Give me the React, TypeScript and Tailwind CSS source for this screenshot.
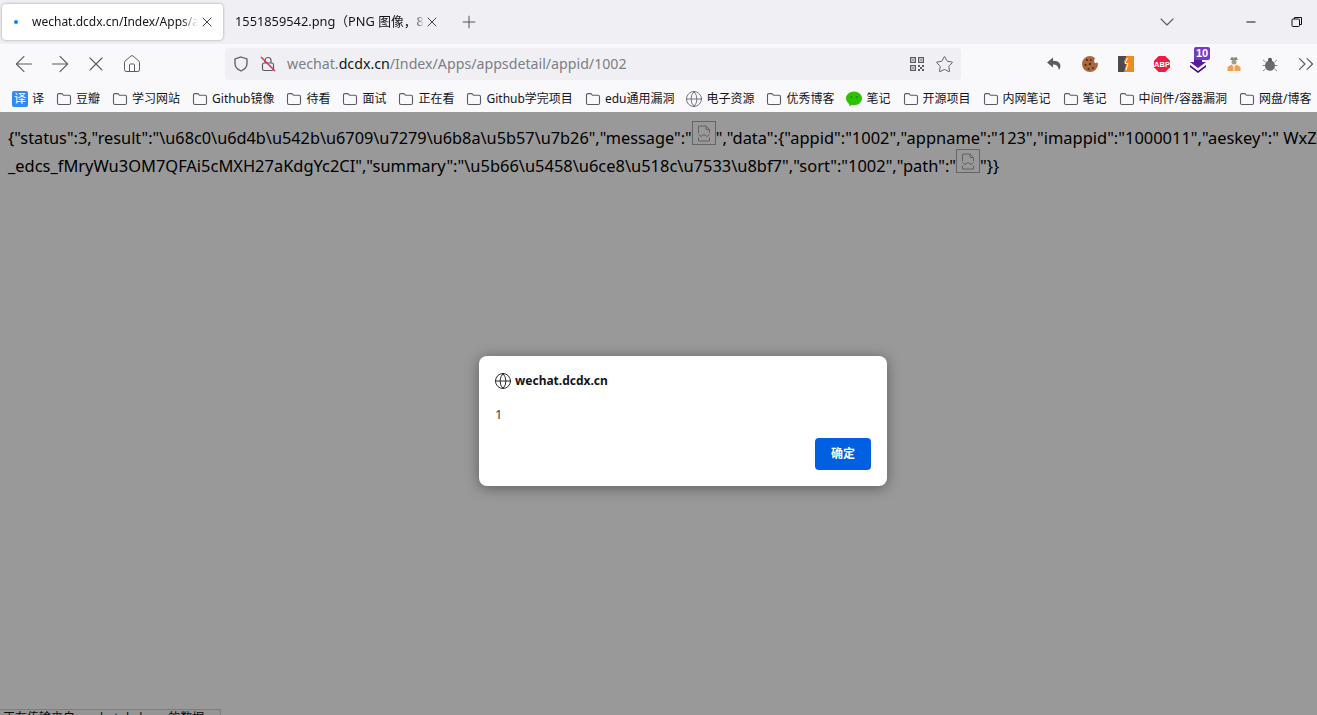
import { ArrowLeft, ArrowRight, ChevronDown, ChevronsRight, Globe, House, Minus, Plus, Star, X } from "lucide-react";

const FONT = "font-['Noto_Sans','Noto_Sans_CJK_SC',sans-serif]";

const bookmarks = [
  { label: "豆瓣" },
  { label: "学习网站" },
  { label: "Github镜像" },
  { label: "待看" },
  { label: "面试" },
  { label: "正在看" },
  { label: "Github学完项目" },
  { label: "edu通用漏洞" },
  { label: "电子资源", icon: "globe" },
  { label: "优秀博客" },
  { label: "笔记", icon: "wechat" },
  { label: "开源项目" },
  { label: "内网笔记" },
  { label: "笔记" },
  { label: "中间件/容器漏洞" },
  { label: "网盘/博客" },
];

function FolderIcon() {
  return (
    <svg width="16" height="16" viewBox="0 0 16 16" fill="none" stroke="#5b5b66" strokeWidth="1.1">
      <path d="M1.5 4c0-.8.6-1.4 1.4-1.4h3l1.6 1.7h5.6c.8 0 1.4.6 1.4 1.4v6.4c0 .8-.6 1.4-1.4 1.4H2.9c-.8 0-1.4-.6-1.4-1.4z" />
    </svg>
  );
}

function WechatIcon() {
  return (
    <svg width="16" height="16" viewBox="0 0 16 16">
      <ellipse cx="8" cy="7.4" rx="8" ry="6.8" fill="#2dc100" />
      <path d="M3.6 12l-.6 3.400 3.800-2.400z" fill="#2dc100" />
      <circle cx="5.4" cy="6" r="1" fill="#1c8a00" />
      <circle cx="10.6" cy="6" r="1" fill="#1c8a00" />
    </svg>
  );
}

function BrokenImage() {
  return (
    <span className="inline-block h-6 w-6 overflow-hidden border border-[#a8a8a8] align-[-1px]">
      <span className="flex h-full w-full items-center justify-center">
        <svg width="14" height="17" viewBox="0 0 14 17" fill="none" stroke="#a4a4a4" strokeWidth="1">
          <path d="M1.500 8V1h7.500l3.500 3.500V8" />
          <path d="M9 1v3.500h3.500" />
          <path d="M1.500 9.500l2.500 2 3-2 3 2 2.500-2" />
          <path d="M1.500 12.500V16h11v-3.500" />
        </svg>
      </span>
    </span>
  );
}

function Extensions() {
  return (
    <div className="flex items-center">
      <ToolSlot>
        <svg width="16" height="16" viewBox="0 0 16 16" fill="#5b5b66">
          <path d="M7 1.500L1 6.500l6 5V8.500c3 0 5 .8 6 5.500 1.500-2 1.800-4 1-6-.9-2-3.500-3.200-7-3.200z" />
        </svg>
      </ToolSlot>
      <ToolSlot>
        <svg width="18" height="18" viewBox="0 0 18 18">
          <path d="M9 1a8 8 0 1 0 8 8l-.5-1.500-2.500.8L13 6l1-3A8 8 0 0 0 9 1z" fill="#a9683f" />
          <circle cx="6" cy="5" r="1.100" fill="#4a2a14" />
          <circle cx="10" cy="5" r=".9" fill="#4a2a14" />
          <circle cx="4.500" cy="10" r="1.100" fill="#4a2a14" />
          <circle cx="9" cy="9" r="1.200" fill="#4a2a14" />
          <circle cx="7.500" cy="14" r="1" fill="#4a2a14" />
          <circle cx="12" cy="13" r="1" fill="#4a2a14" />
        </svg>
      </ToolSlot>
      <ToolSlot>
        <svg width="16" height="16" viewBox="0 0 16 16">
          <rect width="16" height="16" fill="#f18a1c" />
          <path d="M0 0h8.500L5.500 6.500h3L6 16H0z" fill="#4b4b4f" />
          <path d="M9.500 2L7 7.500h3L8 14" fill="none" stroke="#fff" strokeWidth="1" />
        </svg>
      </ToolSlot>
      <ToolSlot>
        <svg width="16" height="16" viewBox="0 0 16 16">
          <path d="M4.700 0h6.600L16 4.700v6.600L11.300 16H4.700L0 11.300V4.700z" fill="#ed1c45" />
          <text x="8" y="10.600" textAnchor="middle" fontSize="7.500" fontWeight="700" fill="#fff" fontFamily="Liberation Sans, sans-serif">ABP</text>
        </svg>
      </ToolSlot>
      <ToolSlot>
        <div className="relative h-4 w-4">
          <svg width="18" height="16" viewBox="0 0 18 16" className="absolute left-[-1px] top-[2px]">
            <path d="M5 0h8v4h4L9 10 1 4h4z" fill="#5a189a" />
            <path d="M1 7l8 6 8-6v2l-8 6-8-6z" fill="#3d0a82" />
          </svg>
          <span className="absolute left-[4px] top-[-9px] rounded-[2px] bg-[#6f3cc3] px-[2px] font-['Liberation_Sans',sans-serif] text-[11px] font-bold leading-[13px] text-white">10</span>
        </div>
      </ToolSlot>
      <ToolSlot>
        <svg width="16" height="16" viewBox="0 0 16 16">
          <path d="M4 4l1.500-3 2.500.8L10.500 1 12 4z" fill="#8b8680" />
          <circle cx="8" cy="6" r="2.500" fill="#a19c94" />
          <path d="M1.500 15v-4l4-2.500L8 11l2.500-2.500 4 2.500v4z" fill="#f5a04a" />
          <path d="M7.500 11h1v4h-1z" fill="#fff" />
        </svg>
      </ToolSlot>
      <ToolSlot>
        <svg width="16" height="16" viewBox="0 0 16 16" stroke="#8a8a8a" strokeWidth="1" fill="none">
          <ellipse cx="8" cy="9.500" rx="5" ry="5.300" fill="#6a6a6a" stroke="none" />
          <circle cx="8" cy="3.800" r="2" fill="#555" stroke="none" />
          <path d="M3.500 6L1 4M12.500 6L15 4M3 9.500H.5M13 9.500h2.500M3.500 13L1 15M12.500 13L15 15" />
        </svg>
      </ToolSlot>
      <ToolSlot>
        <ChevronsRight size={26} strokeWidth={1.1} color="#5b5b66" />
      </ToolSlot>
    </div>
  );
}

function ToolSlot({ children }: { children: React.ReactNode }) {
  return <div className="flex h-8 w-9 shrink-0 items-center justify-center">{children}</div>;
}

export default function App() {
  return (
    <div className={`flex h-[715px] w-full flex-col overflow-hidden bg-white text-[#15141a] ${FONT}`}>
      {/* Tab strip */}
      <div className="flex h-[44px] shrink-0 items-center bg-[#f0f0f4] pl-[2px]">
        <div className="flex h-9 w-[221px] items-center rounded-[4px] bg-white pl-3 pr-[8px] shadow-[0_0_3px_rgba(0,0,0,0.35)]">
          <span className="mr-[14px] h-[4px] w-[4px] shrink-0 rounded-full bg-[#0a84ff]" />
          <span className="min-w-0 flex-1 overflow-hidden whitespace-nowrap text-[12px] [mask-image:linear-gradient(to_right,black_90%,transparent)]">
            wechat.dcdx.cn/Index/Apps/appsdetail/appid/1002
          </span>
          <X size={16} strokeWidth={1.2} className="ml-[1px] shrink-0" />
        </div>
        <div className="ml-[12px] flex h-9 w-[205px] items-center">
          <span className="min-w-0 flex-1 overflow-hidden whitespace-nowrap text-[12.8px] [mask-image:linear-gradient(to_right,black_95%,transparent)]">
            1551859542.png（PNG 图像，898 × 500 像素）
          </span>
          <X size={16} strokeWidth={1.2} className="shrink-0" />
        </div>
        <Plus size={20} strokeWidth={1.1} color="#45454d" className="ml-[19px]" />
        <div className="flex-1" />
        <ChevronDown size={24} strokeWidth={1.1} color="#5b5b66" className="mr-[65px]" />
        <Minus size={14} strokeWidth={1.7} color="#111" className="mr-[33px]" />
        <svg width="12" height="12" viewBox="0 0 12 12" fill="none" stroke="#111" strokeWidth="1" className="mr-[14px]">
          <rect x="1" y="3" width="7.500" height="7.500" rx="1" />
          <path d="M3.500 3V1.500h7v7H8.500" />
        </svg>
      </div>

      {/* Toolbar */}
      <div className="flex h-10 shrink-0 items-center bg-[#f9f9fb] pl-[6px]">
        <ToolSlot>
          <ArrowLeft size={26} strokeWidth={1} color="#5b5b66" />
        </ToolSlot>
        <ToolSlot>
          <ArrowRight size={26} strokeWidth={1} color="#5b5b66" />
        </ToolSlot>
        <ToolSlot>
          <X size={24} strokeWidth={1.1} color="#5b5b66" />
        </ToolSlot>
        <div className="flex h-8 w-[35px] shrink-0 items-center justify-center">
          <House size={20} strokeWidth={1.2} color="#5b5b66" />
        </div>
        <div className="ml-[76px] flex h-8 w-[736px] shrink-0 items-center rounded-[4px] bg-[#f0f0f4] pl-2 pr-[7px]">
          <svg width="16" height="16" viewBox="0 0 16 16" fill="none" stroke="#5b5b66" strokeWidth="1.300">
            <path d="M8 1l6 2v4.500c0 3.500-2.500 6-6 7.500-3.500-1.500-6-4-6-7.500V3z" />
          </svg>
          <div className="relative ml-[11px] mr-[11px] h-4 w-4">
            <svg width="16" height="16" viewBox="0 0 16 16" fill="none" stroke="#5b5b66" strokeWidth="1.200">
              <rect x="2.500" y="7" width="11" height="7.500" rx="1.500" />
              <path d="M5 7V4.500a3 3 0 0 1 6 0V7" />
              <path d="M1 1l14 14" stroke="#e22850" strokeWidth="1.400" />
            </svg>
          </div>
          <span className="whitespace-nowrap text-[14.2px] text-[#7d7d85]">
            wechat.<span className="text-[#15141a]">dcdx.cn</span>/Index/Apps/appsdetail/appid/1002
          </span>
          <div className="flex-1" />
          <svg width="16" height="16" viewBox="0 0 16 16" fill="#5b5b66" className="mr-[10px]">
            <path d="M1 1h6v6H1zm1.300 1.300v3.400h3.400V2.300zM9 1h6v6H9zm1.300 1.300v3.400h3.400V2.300zM1 9h6v6H1zm1.300 1.300v3.400h3.400v-3.400z" fillRule="evenodd" />
            <path d="M3.300 3.300h1.400v1.400H3.300zM11.300 3.300h1.400v1.400h-1.400zM3.300 11.300h1.400v1.400H3.300zM9 9h2v2H9zM13 9h2v2h-2zM11 11h2v2h-2zM9 13h2v2H9zM13 13h2v2h-2z" />
          </svg>
          <Star size={19} strokeWidth={1.2} color="#5b5b66" />
        </div>
        <div className="ml-[75px] shrink-0">
          <Extensions />
        </div>
      </div>

      {/* Bookmarks */}
      <div className="flex h-7 shrink-0 items-center gap-3 overflow-hidden whitespace-nowrap bg-[#f9f9fb] pl-3 pt-px text-[12px]">
        <div className="flex items-center gap-1">
          <span className="flex h-4 w-4 items-center justify-center rounded-[2px] bg-[#2f8cf2] text-[12px] leading-none text-white">译</span>
          <span>译</span>
        </div>
        {bookmarks.map((b, i) => (
          <div key={i} className="flex items-center gap-1">
            {b.icon === "globe" ? (
              <Globe size={18} strokeWidth={1.1} color="#5b5b66" className="-mx-px" />
            ) : b.icon === "wechat" ? (
              <WechatIcon />
            ) : (
              <FolderIcon />
            )}
            <span>{b.label}</span>
          </div>
        ))}
      </div>

      {/* Page content with the dialog overlay */}
      <div className="relative min-h-0 flex-1 overflow-hidden bg-white">
        <div className="whitespace-nowrap pl-2 pt-[9px] text-[16.45px] leading-[28px] text-black">
          <div className="h-[28px]">
            <span className="text-[16.3px]">
              {'{"status":3,"result":"\\u68c0\\u6d4b\\u542b\\u6709\\u7279\\u6b8a\\u5b57\\u7b26","message":"'}
            </span>
            <BrokenImage />
            {'","data":{"appid":"1002","appname":"123","imappid":"1000011","aeskey":" WxZ'}
          </div>
          <div className="h-[28px]">
            {'_edcs_fMryWu3OM7QFAi5cMXH27aKdgYc2CI","summary":"\\u5b66\\u5458\\u6ce8\\u518c\\u7533\\u8bf7","sort":"1002","path":"'}
            <BrokenImage />
            {'"}}'}
          </div>
        </div>

        <div className="absolute bottom-0 left-0 h-[6px] w-[221px] overflow-hidden border-r border-t border-[#cfcfd8] bg-[#f9f9fb] pl-[3px] text-[12px] leading-[16px] text-[#15141a]">
          正在传输来自 wechat.dcdx.cn 的数据…
        </div>

        <div className="absolute inset-0 bg-black/40" />

        <div className="absolute left-[479px] top-[244px] flex h-[130px] w-[408px] flex-col rounded-[8px] bg-white px-4 pt-[17px] shadow-[0_2px_14px_rgba(0,0,0,0.4)]">
          <div className="flex h-4 items-center gap-1 text-[12px] font-bold text-[#15141a]">
            <Globe size={18} strokeWidth={1.2} className="-mx-px" />
            <span>wechat.dcdx.cn</span>
          </div>
          <div className="mt-[17px] text-[13px] leading-4 text-[#3a3a42]">1</div>
          <div className="mt-4 flex justify-end">
            <button className="h-8 w-14 rounded-[4px] bg-[#0060df] text-[12px] font-bold text-white">确定</button>
          </div>
        </div>
      </div>
    </div>
  );
}
